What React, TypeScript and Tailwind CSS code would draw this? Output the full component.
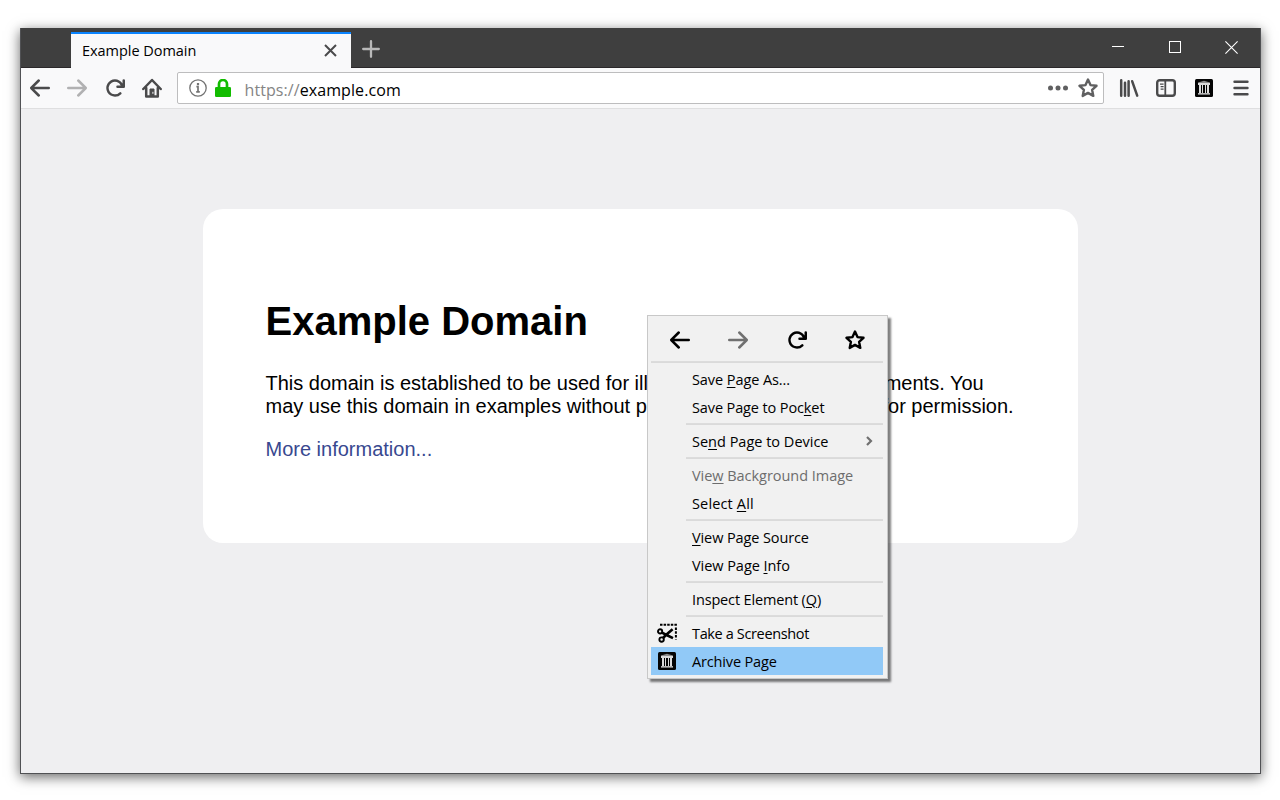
import type { ReactNode } from "react";

const BACK =
  "M15 7H3.414l4.293-4.293a1 1 0 0 0-1.414-1.414l-6 6a1 1 0 0 0 0 1.414l6 6a1 1 0 0 0 1.414-1.414L3.414 9H15a1 1 0 0 0 0-2z";
const RELOAD =
  "M15 1a1 1 0 0 0-1 1v2.418A6.995 6.995 0 1 0 8 15a6.954 6.954 0 0 0 4.95-2.05 1 1 0 0 0-1.414-1.414A5.019 5.019 0 1 1 12.549 6H10a1 1 0 0 0 0 2h5a1 1 0 0 0 1-1V2a1 1 0 0 0-1-1z";

function Glyph({ d, flip = false }: { d: string; flip?: boolean }) {
  return (
    <svg viewBox="0 0 16 16" className={flip ? "size-5 -scale-x-100" : "size-5"} fill="currentColor">
      <path d={d} />
    </svg>
  );
}

function Star() {
  return (
    <svg viewBox="0 0 20 20" className="size-5" fill="none" stroke="currentColor" strokeWidth="2.4" strokeLinejoin="round">
      <path d="M10 1.6l2.5 5.5 6 .7-4.4 4 1.2 6.1L10 14.9l-5.3 3 1.2-6.1-4.4-4 6-.7z" />
    </svg>
  );
}

function Home() {
  return (
    <svg viewBox="0 0 20 20" className="size-5" fill="none" stroke="currentColor" strokeWidth="2.5" strokeLinecap="round" strokeLinejoin="round">
      <path d="M1.3 11L10 2l8.7 9" />
      <path d="M4.2 10v8.4h11.6V10" />
      <path d="M8 18v-7h4v7z" fill="currentColor" strokeWidth="1" />
      <path d="M10.9 14.2v1.2" stroke="#f9f9fa" strokeWidth="1" />
    </svg>
  );
}

function Library() {
  return (
    <svg viewBox="0 0 20 20" className="size-5" fill="none" stroke="currentColor" strokeWidth="2.5" strokeLinecap="round">
      <path d="M2.2 2.3v15.4M6 4.8v12.9M9.6 3.2v14.5" />
      <path d="M13.2 3.3l5 14.3" />
    </svg>
  );
}

function Sidebar() {
  return (
    <svg viewBox="0 0 20 20" className="size-5" fill="none" stroke="currentColor">
      <rect x="1.2" y="2.2" width="17.6" height="15.6" rx="2.5" strokeWidth="2.4" />
      <path d="M9.3 2.5v15" strokeWidth="1.8" />
      <path d="M4 6.2h3.6M4.6 8.7h3M4.6 11.2h3" strokeWidth="1.2" />
    </svg>
  );
}

function Archive() {
  return (
    <svg viewBox="0 0 18 18" className="size-[18px]">
      <rect width="18" height="18" rx="1.5" fill="#050505" />
      <path d="M9 1.8L3 3.4V4h12v-.6z" fill="#8c8c8c" />
      <path d="M3 4h12v2H3z" fill="#dadada" />
      <path d="M4 6h2v8H4zM7 6h1v8H7zM10 6h1v8h-1zM12 6h2v8h-2z" fill="#dcdcdc" />
      <path d="M3 14h12v1H3z" fill="#b8b8b8" />
      <path d="M3 15h12v1H3z" fill="#777" />
    </svg>
  );
}

function Scissors() {
  return (
    <svg viewBox="0 0 20 20" className="size-5" fill="none" stroke="currentColor">
      <path d="M3 1.8h17" strokeWidth="2" strokeDasharray="2.5 1.1" />
      <path d="M18.9 4.5v12" strokeWidth="2" strokeDasharray="2.4 1.4" />
      <circle cx="3.1" cy="8.4" r="2.1" strokeWidth="1.9" />
      <circle cx="4.6" cy="16.6" r="2.2" strokeWidth="1.9" />
      <path d="M5 9.6L9.5 12l6.5 3.2M6 15l3.5-3.5L15.6 6.2" strokeWidth="2.6" />
    </svg>
  );
}

function ToolButton({ children }: { children: ReactNode }) {
  return <div className="flex h-full w-[37.5px] items-center justify-center text-[#4a4a4b]">{children}</div>;
}

function Item({
  children,
  icon,
  tracking,
  className = "",
}: {
  children: ReactNode;
  icon?: ReactNode;
  tracking: string;
  className?: string;
}) {
  return (
    <div className={`flex h-7 items-center ${className}`}>
      <div className="flex w-[41px] items-center pl-[6px]">{icon}</div>
      <div className={`flex-1 whitespace-nowrap pt-px ${tracking}`}>{children}</div>
    </div>
  );
}

function Key({ children }: { children: string }) {
  return <span className="underline decoration-1 underline-offset-[2px]">{children}</span>;
}

function Separator() {
  return (
    <div className="h-[6px] pl-[35px] pt-[2px]">
      <div className="h-[2px] border-t border-[#dcdcdc] bg-[#dadada]" />
    </div>
  );
}

function ContextMenu() {
  return (
    <div className="absolute left-[647px] top-[315px] h-[364px] w-[241px] border border-[#c8c8c8] bg-[#f1f1f1] pl-[3px] pr-[4px] text-[14.5px] leading-5 text-black shadow-[3px_3px_2px_rgba(0,0,0,0.5)]">
      <div className="flex h-[45px] items-center pt-[3px]">
        <div className="flex w-[58px] justify-center"><Glyph d={BACK} /></div>
        <div className="flex w-[58px] justify-center text-[#707070]"><Glyph d={BACK} flip /></div>
        <div className="flex w-[60px] justify-center"><Glyph d={RELOAD} /></div>
        <div className="flex w-[56px] justify-center"><Star /></div>
      </div>
      <div className="h-[2px] border-t border-[#dcdcdc] bg-[#dadada]" />
      <div className="h-[2px]" />
      <Item tracking="tracking-[-0.08px]">Save <Key>P</Key>age As...</Item>
      <Item tracking="tracking-[-0.12px]">Save Page to Poc<Key>k</Key>et</Item>
      <Separator />
      <div className="flex items-center">
        <Item tracking="tracking-normal" className="flex-1">Se<Key>n</Key>d Page to Device</Item>
        <svg viewBox="0 0 8 12" className="mr-[10px] h-3 w-2" fill="none" stroke="#707070" strokeWidth="2.2"><path d="M2 2L6 6 2 10" /></svg>
      </div>
      <Separator />
      <Item tracking="tracking-[-0.04px]" className="text-[#6d6d6d]">Vie<Key>w</Key> Background Image</Item>
      <Item tracking="tracking-[0.15px]">Select <Key>A</Key>ll</Item>
      <Separator />
      <Item tracking="tracking-[-0.11px]"><Key>V</Key>iew Page Source</Item>
      <Item tracking="tracking-[-0.05px]">View Page <Key>I</Key>nfo</Item>
      <Separator />
      <Item tracking="tracking-[-0.15px]">Inspect Element (<Key>Q</Key>)</Item>
      <Separator />
      <Item tracking="tracking-[-0.36px]" icon={<Scissors />}>Take a Screenshot</Item>
      <Item tracking="tracking-[-0.15px]" icon={<div className="pl-px"><Archive /></div>} className="bg-[#91c9f7]">Archive Page</Item>
    </div>
  );
}

export default function App() {
  return (
    <div className="relative h-[800px] w-[1280px] overflow-hidden bg-white pl-5 pt-7 font-['Open_Sans',sans-serif]">
      <div className="flex h-[746px] w-[1241px] flex-col border border-t-0 border-[#505154] bg-[#efeff1] shadow-[0_3px_12px_rgba(0,0,0,0.6)]">
        <div className="flex h-10 border-b border-[#2b282a] bg-[#3f3f3f]">
          <div className="ml-[50px] mt-1 flex h-9 w-[280px] items-center justify-between border-t-2 border-[#0a84ff] bg-[#f9f9fa] pl-[11px] pr-[14px]">
            <span className="text-[14.5px] leading-5 tracking-[-0.04px] text-black">Example Domain</span>
            <svg viewBox="0 0 13 13" className="mb-px size-[13px]" fill="none" stroke="#4a4a4b" strokeWidth="2"><path d="M1 1l11 11M12 1L1 12" /></svg>
          </div>
          <svg viewBox="0 0 18 18" className="ml-[11px] mt-3 size-[18px]" fill="none" stroke="#b9b9b9" strokeWidth="2.3" strokeLinecap="round"><path d="M9 1.2v15.6M1.2 9h15.6" /></svg>
          <div className="flex-1" />
          <div className="flex h-[38px] w-[171px] items-center">
            <div className="flex w-[57px] justify-center"><div className="mb-px h-px w-3 bg-white" /></div>
            <div className="flex w-[57px] justify-center"><div className="size-3 border border-white" /></div>
            <div className="flex w-[57px] justify-center">
              <svg viewBox="0 0 13 13" className="size-[13px]" fill="none" stroke="#fff" strokeWidth="1.1"><path d="M.4.4l12.2 12.2M12.6.4L.4 12.6" /></svg>
            </div>
          </div>
        </div>

        <div className="flex h-[41px] items-center border-b border-[#dfdfe0] bg-[#f9f9fa]">
          <div className="flex h-full">
            <ToolButton><Glyph d={BACK} /></ToolButton>
            <div className="flex h-full w-[37.5px] items-center justify-center text-[#b1b1b2]"><Glyph d={BACK} flip /></div>
            <ToolButton><Glyph d={RELOAD} /></ToolButton>
            <ToolButton><Home /></ToolButton>
          </div>
          <div className="ml-[6px] flex h-8 flex-1 items-center rounded-[2px] border border-[#bdbdbe] bg-white pl-[11px] pr-[5px]">
            <svg viewBox="0 0 18 18" className="size-[18px]" fill="none" stroke="#737373">
              <circle cx="9" cy="9" r="8.2" strokeWidth="1.3" />
              <path d="M7.4 7.7H9v5M7.2 12.8h3.6" strokeWidth="1.7" />
              <path d="M9 4v2.2" strokeWidth="2.2" />
            </svg>
            <svg viewBox="0 0 16 18" className="ml-2 h-[18px] w-4" fill="none">
              <rect y="8" width="16" height="10" rx="1.3" fill="#12bc00" />
              <path d="M4 9V5a4 4 0 0 1 8 0v4" stroke="#12bc00" strokeWidth="2.7" />
            </svg>
            <div className="ml-[13.5px] flex-1 pt-[3px] text-[16px] leading-6 tracking-[0.08px] text-black"><span className="text-[#858585]">https://</span>example.com</div>
            <svg viewBox="0 0 20 6" className="mr-[10px] h-[6px] w-5" fill="#606061"><circle cx="2.5" cy="3" r="2.5" /><circle cx="10" cy="3" r="2.5" /><circle cx="17.5" cy="3" r="2.5" /></svg>
            <div className="text-[#606061]"><Star /></div>
          </div>
          <div className="ml-[6px] flex h-full">
            <ToolButton><Library /></ToolButton>
            <ToolButton><Sidebar /></ToolButton>
            <ToolButton><Archive /></ToolButton>
            <ToolButton>
              <svg viewBox="0 0 16 16" className="size-4" fill="none" stroke="currentColor" strokeWidth="2.4" strokeLinecap="round"><path d="M1.5 1.7h13M1.5 8h13M1.5 14.3h13" /></svg>
            </ToolButton>
          </div>
        </div>

        <div className="ml-[182px] mt-[100px] h-[334px] w-[875px] rounded-[20px] bg-white pl-[62.5px] pt-[89px] font-['Liberation_Sans',Arial,sans-serif] text-[20px] leading-[23px] text-black">
          <h1 className="text-[40px] font-bold leading-[46px]">Example Domain</h1>
          <p className="mt-[28px] whitespace-nowrap">
            This domain is established to be used for illustrative examples in documents. You
            <br />
            may use this domain in examples without prior coordination or asking for permission.
          </p>
          <p className="mt-5 text-[#38488f]">More information...</p>
        </div>
      </div>
      <ContextMenu />
    </div>
  );
}
